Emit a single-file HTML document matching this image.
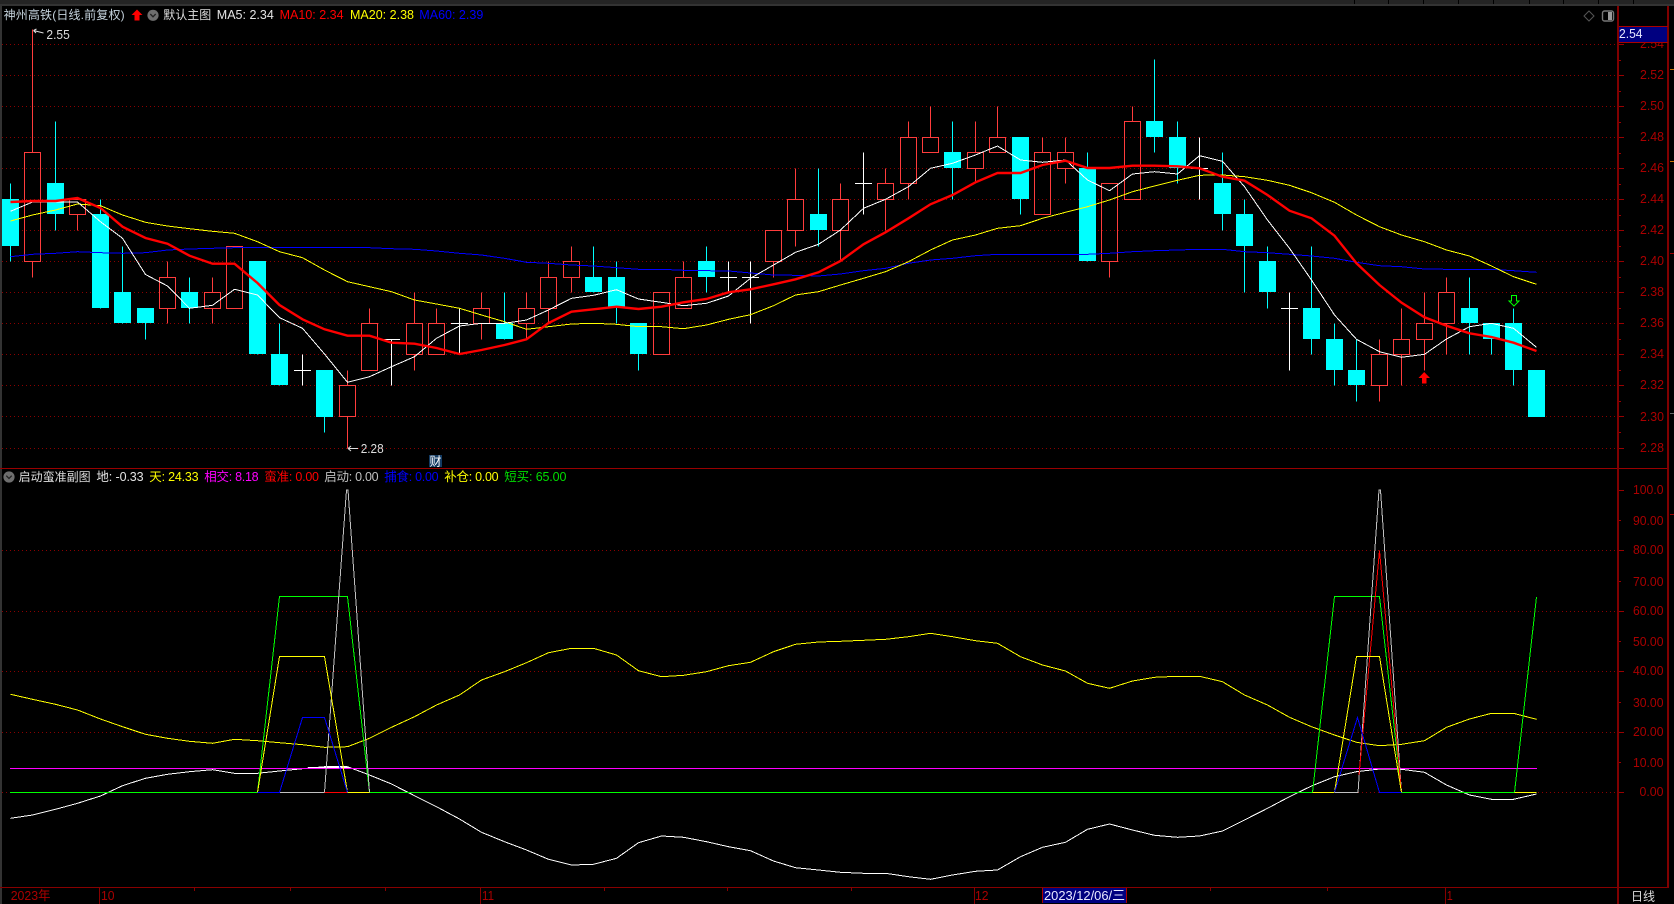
<!DOCTYPE html>
<html>
<head>
<meta charset="utf-8">
<title>神州高铁</title>
<style>
html,body{margin:0;padding:0;background:#000;width:1674px;height:904px;overflow:hidden}
svg{display:block;position:absolute;left:0;top:0}
text{font-family:"Liberation Sans","Noto Sans CJK SC",sans-serif;font-size:12.5px}
.ax{fill:#aa0000;font-size:13px}
.ln{fill:none;stroke-width:1;shape-rendering:crispEdges}
</style>
</head>
<body>
<svg width="1674" height="904" viewBox="0 0 1674 904" xmlns="http://www.w3.org/2000/svg">
<rect width="1674" height="904" fill="#000"/>
<!-- top bar -->
<rect x="0" y="0" width="1674" height="4" fill="#242424"/>
<rect x="0" y="4" width="1674" height="2" fill="#333"/>
<path d="M1354.5 0V4M1388.5 0V4M1423.5 0V4M1458.5 0V4M1493.5 0V4M1529.5 0V4M1563.5 0V4M1598.5 0V4M1633.5 0V4" stroke="#000" shape-rendering="crispEdges"/>
<rect x="0" y="6" width="2" height="898" fill="#333"/>

<!-- grid upper -->
<path class="ln" stroke="#8b0000" stroke-dasharray="1 3" d="M2 44.5H1618M2 75.5H1618M2 106.5H1618M2 137.5H1618M2 168.5H1618M2 199.5H1618M2 230.5H1618M2 261.5H1618M2 292.5H1618M2 323.5H1618M2 354.5H1618M2 385.5H1618M2 416.5H1618M2 448.5H1618"/>
<!-- grid lower -->
<path class="ln" stroke="#8b0000" stroke-dasharray="1 3" d="M2 550.5H1618M2 611.5H1618M2 671.5H1618M2 732.5H1618M2 792.5H1618"/>

<!-- cyan wicks -->
<path class="ln" stroke="#00ffff" d="M10.5 183.5V261.5M55.5 121.5V230.5M100.5 199.5V308.5M122.5 246.5V323.5M145.5 308.5V339.5M189.5 277.5V323.5M257.5 261.5V354.5M279.5 323.5V385.5M324.5 370.5V432.5M504.5 292.5V339.5M593.5 246.5V292.5M616.5 261.5V323.5M638.5 323.5V370.5M706.5 246.5V292.5M818.5 168.5V246.5M952.5 121.5V199.5M1020.5 137.5V214.5M1087.5 152.5V261.5M1154.5 59.5V152.5M1177.5 121.5V183.5M1222.5 152.5V230.5M1244.5 199.5V292.5M1267.5 246.5V308.5M1311.5 246.5V354.5M1334.5 323.5V385.5M1356.5 339.5V401.5M1469.5 277.5V354.5M1491.5 323.5V354.5M1513.5 308.5V385.5"/>
<!-- cyan bodies -->
<path fill="#00ffff" shape-rendering="crispEdges" d="M2 199h17V246h-17zM47 183h17V214h-17zM92 214h17V308h-17zM114 292h17V323h-17zM137 308h17V323h-17zM181 292h17V308h-17zM249 261h17V354h-17zM271 354h17V385h-17zM316 370h17V417h-17zM496 323h17V339h-17zM585 277h17V292h-17zM608 277h17V308h-17zM630 323h17V354h-17zM698 261h17V277h-17zM810 214h17V230h-17zM944 152h17V168h-17zM1012 137h17V199h-17zM1079 168h17V261h-17zM1146 121h17V137h-17zM1169 137h17V168h-17zM1214 183h17V214h-17zM1236 214h17V246h-17zM1259 261h17V292h-17zM1303 308h17V339h-17zM1326 339h17V370h-17zM1348 370h17V385h-17zM1461 308h17V323h-17zM1483 323h17V339h-17zM1505 323h17V370h-17zM1528 370h17V417h-17z"/>
<!-- red candles -->
<path class="ln" stroke="#ff3c3c" d="M32.5 29.5V152.5M32.5 261.5V277.5M24.5 152.5h16V261.5h-16z
M77.5 214.5V230.5M69.5 199.5h16V214.5h-16z
M167.5 261.5V277.5M167.5 308.5V323.5M159.5 277.5h16V308.5h-16z
M212.5 277.5V292.5M212.5 308.5V323.5M204.5 292.5h16V308.5h-16z
M226.5 246.5h16V308.5h-16z
M347.5 370.5V385.5M347.5 416.5V448.5M339.5 385.5h16V416.5h-16z
M369.5 308.5V323.5M361.5 323.5h16V370.5h-16z
M414.5 292.5V323.5M414.5 354.5V370.5M406.5 323.5h16V354.5h-16z
M436.5 308.5V323.5M428.5 323.5h16V354.5h-16z
M481.5 292.5V308.5M481.5 323.5V339.5M473.5 308.5h16V323.5h-16z
M526.5 292.5V308.5M526.5 323.5V339.5M518.5 308.5h16V323.5h-16z
M548.5 261.5V277.5M548.5 308.5V323.5M540.5 277.5h16V308.5h-16z
M571.5 246.5V261.5M571.5 277.5V292.5M563.5 261.5h16V277.5h-16z
M653.5 292.5h16V354.5h-16z
M683.5 261.5V277.5M675.5 277.5h16V308.5h-16z
M773.5 261.5V277.5M765.5 230.5h16V261.5h-16z
M795.5 168.5V199.5M795.5 230.5V246.5M787.5 199.5h16V230.5h-16z
M840.5 183.5V199.5M840.5 230.5V261.5M832.5 199.5h16V230.5h-16z
M885.5 168.5V183.5M885.5 199.5V230.5M877.5 183.5h16V199.5h-16z
M908.5 121.5V137.5M908.5 183.5V199.5M900.5 137.5h16V183.5h-16z
M930.5 106.5V137.5M922.5 137.5h16V152.5h-16z
M975.5 121.5V152.5M975.5 168.5V183.5M967.5 152.5h16V168.5h-16z
M997.5 106.5V137.5M989.5 137.5h16V152.5h-16z
M1042.5 137.5V152.5M1034.5 152.5h16V214.5h-16z
M1065.5 137.5V152.5M1065.5 168.5V183.5M1057.5 152.5h16V168.5h-16z
M1109.5 261.5V277.5M1101.5 183.5h16V261.5h-16z
M1132.5 106.5V121.5M1124.5 121.5h16V199.5h-16z
M1379.5 339.5V354.5M1379.5 385.5V401.5M1371.5 354.5h16V385.5h-16z
M1401.5 308.5V339.5M1401.5 354.5V385.5M1393.5 339.5h16V354.5h-16z
M1424.5 292.5V323.5M1424.5 339.5V370.5M1416.5 323.5h16V339.5h-16z
M1446.5 277.5V292.5M1446.5 323.5V354.5M1438.5 292.5h16V323.5h-16z"/>
<!-- white doji -->
<path class="ln" stroke="#ffffff" d="M302.5 354.5V385.5M294 370.5h17M391.5 339.5V385.5M383 339.5h17M459.5 308.5V354.5M451 323.5h17M728.5 261.5V292.5M720 277.5h17M750.5 261.5V323.5M742 277.5h17M863.5 152.5V214.5M855 183.5h17M1199.5 137.5V199.5M1191 168.5h17M1289.5 292.5V370.5M1281 308.5h17"/>

<!-- MA60 -->
<polyline class="ln" stroke="#0000ff" points="10.5,256.7 32.5,254.3 55.5,253.3 77.5,251.7 100.5,252.7 122.5,253.3 145.5,252.7 167.5,250 189.5,249 212.5,248.3 234.5,247.7 257.5,247.7 279.5,247.7 302.5,247.7 324.5,247.7 347.5,247.7 369.5,247.7 391.5,248.7 414.5,249.3 436.5,251 459.5,253.3 481.5,255 504.5,258.3 526.5,262.3 548.5,263.3 571.5,265 593.5,266 616.5,267.7 638.5,269.3 661.5,269.3 683.5,270.3 706.5,270.7 728.5,271 750.5,273 773.5,275 795.5,275.3 818.5,276 840.5,274 863.5,270.7 885.5,268.3 908.5,263.3 930.5,260 952.5,258.3 975.5,255.7 997.5,254.3 1020.5,254.3 1042.5,254.3 1065.5,254.3 1087.5,254.3 1109.5,253.3 1132.5,251.7 1154.5,250.7 1177.5,250 1199.5,249.3 1222.5,249.3 1244.5,251.7 1267.5,252.7 1289.5,254.3 1311.5,256 1334.5,258.3 1356.5,262.3 1379.5,265.7 1401.5,266.7 1424.5,269 1446.5,269.3 1469.5,269.3 1491.5,269.3 1513.5,270.7 1536.5,272.3"/>
<!-- MA20 -->
<polyline class="ln" stroke="#ffff00" points="10.5,221 32.5,215 55.5,210 77.5,204 100.5,205.7 122.5,215 145.5,222.3 167.5,226 189.5,228.7 212.5,231.3 234.5,233.3 257.5,241.7 279.5,251.7 302.5,257.7 324.5,270 347.5,281.7 369.5,286.7 391.5,291.7 414.5,300 436.5,304 459.5,308.3 481.5,315 504.5,321.7 526.5,329.3 548.5,326.7 571.5,324 593.5,323.3 616.5,324.3 638.5,326.7 661.5,326.7 683.5,328.7 706.5,325 728.5,319.3 750.5,314.7 773.5,305.7 795.5,295 818.5,291.7 840.5,285 863.5,278.3 885.5,271.7 908.5,261.7 930.5,250 952.5,240 975.5,235 997.5,228.3 1020.5,225.7 1042.5,218.3 1065.5,212.3 1087.5,206.7 1109.5,200 1132.5,191.7 1154.5,186 1177.5,180.3 1199.5,175.3 1222.5,175 1244.5,176.7 1267.5,180.3 1289.5,185.3 1311.5,192.7 1334.5,202.3 1356.5,215 1379.5,226.7 1401.5,235 1424.5,241.7 1446.5,250 1469.5,256 1491.5,266 1513.5,276.7 1536.5,284.3"/>
<!-- MA5 -->
<polyline class="ln" stroke="#ffffff" points="10.5,211.3 32.5,202 55.5,202 77.5,202 100.5,221.7 122.5,238.3 145.5,274.5 167.5,286 189.5,308.3 212.5,305.3 234.5,289.3 257.5,295 279.5,317.7 302.5,328.3 324.5,354 347.5,382.3 369.5,376.7 391.5,366.7 414.5,356.7 436.5,338.3 459.5,326 481.5,323.3 504.5,323.3 526.5,320 548.5,310 571.5,298.3 593.5,295.3 616.5,289.7 638.5,299 661.5,302.3 683.5,305.7 706.5,303.3 728.5,296 750.5,278.3 773.5,265 795.5,252.3 818.5,244.3 840.5,230 863.5,208.3 885.5,199.3 908.5,186.7 930.5,168.3 952.5,163.3 975.5,155 997.5,146 1020.5,160 1042.5,162.3 1065.5,160 1087.5,180 1109.5,190.7 1132.5,174 1154.5,171.7 1177.5,174 1199.5,155.7 1222.5,161.3 1244.5,186.7 1267.5,220 1289.5,248.3 1311.5,280 1334.5,315 1356.5,339.3 1379.5,351.7 1401.5,357.3 1424.5,354.3 1446.5,339 1469.5,326.7 1491.5,323.3 1513.5,328.3 1536.5,347.3"/>
<!-- MA10 -->
<polyline fill="none" stroke="#ff0000" stroke-width="2.4" points="10.5,202 32.5,201 55.5,201 77.5,198 100.5,208 122.5,226.7 145.5,238 167.5,243.7 189.5,255.7 212.5,263.7 234.5,263.7 257.5,283 279.5,305 302.5,319.3 324.5,329.3 347.5,335.7 369.5,335.7 391.5,342.7 414.5,343.7 436.5,348 459.5,354 481.5,350 504.5,345 526.5,339.3 548.5,323 571.5,311.7 593.5,309.3 616.5,306.7 638.5,309 661.5,306.7 683.5,302.3 706.5,299 728.5,292.3 750.5,289.3 773.5,284.3 795.5,279.3 818.5,272.3 840.5,261 863.5,244.3 885.5,232.3 908.5,218.3 930.5,204.3 952.5,195 975.5,182.3 997.5,173 1020.5,173 1042.5,165 1065.5,160.7 1087.5,168 1109.5,168 1132.5,165.7 1154.5,165.7 1177.5,166.3 1199.5,168.3 1222.5,176.7 1244.5,180.7 1267.5,195 1289.5,210.7 1311.5,218.3 1334.5,235.7 1356.5,263.3 1379.5,285 1401.5,302.7 1424.5,317.3 1446.5,325.7 1469.5,333.3 1491.5,337 1513.5,342.7 1536.5,351"/>

<!-- signal arrows -->
<path fill="#ff0000" d="M1424.2 372L1430 378H1426.5V383.5H1422V378H1418.5Z"/>
<path fill="none" stroke="#00ff00" d="M1511.5 295.5H1516.5V301H1519L1514 306L1509 301H1511.5Z"/>

<!-- high/low marks -->
<path fill="none" stroke="#dddddd" d="M43.5 33L33.5 30.5M33.5 30.5L36.5 29M33.5 30.5L36 33"/>
<text x="46.4" y="39" fill="#dddddd" textLength="23.4" lengthAdjust="spacingAndGlyphs">2.55</text>
<path fill="none" stroke="#dddddd" d="M348 448.5H358M348 448.5L351 446M348 448.5L351 451"/>
<text x="360.7" y="453" fill="#dddddd" textLength="23" lengthAdjust="spacingAndGlyphs">2.28</text>
<rect x="429" y="455" width="13" height="12" fill="#123a62"/>
<text x="429.5" y="465.5" fill="#ffffff" style="font-size:12px">财</text>

<!-- sub chart -->
<polyline class="ln" stroke="#ffff00" points="10.5,694.3 32.5,699.3 55.5,704.3 77.5,710 100.5,719 122.5,726.7 145.5,734.3 167.5,738.3 189.5,741.3 212.5,743.3 234.5,739.3 257.5,740.7 279.5,742.7 302.5,744.7 324.5,747.3 347.5,746.7 369.5,738.3 391.5,727.3 414.5,716.7 436.5,705 459.5,695 481.5,680 504.5,671.7 526.5,662.7 548.5,652.7 571.5,648.3 593.5,648.3 616.5,655 638.5,670.7 661.5,676.7 683.5,675.3 706.5,671.7 728.5,665.7 750.5,662.3 773.5,651.7 795.5,644.3 818.5,642 840.5,641.3 863.5,640.3 885.5,639.3 908.5,636.7 930.5,633.3 952.5,636.7 975.5,640.7 997.5,643.3 1020.5,656.7 1042.5,665 1065.5,671 1087.5,683.3 1109.5,688.3 1132.5,681 1154.5,677.3 1177.5,676.3 1199.5,676.3 1222.5,681.7 1244.5,695 1267.5,705 1289.5,717.3 1311.5,726.7 1334.5,735 1356.5,742.3 1379.5,745.7 1401.5,744.3 1424.5,740.7 1446.5,727.3 1469.5,719 1491.5,713.3 1513.5,713.3 1536.5,719.3"/>
<polyline class="ln" stroke="#ffffff" points="10.5,818.3 32.5,815 55.5,809.3 77.5,803.3 100.5,796 122.5,785.7 145.5,778.3 167.5,774.3 189.5,771.7 212.5,769.7 234.5,773.3 257.5,773.3 279.5,771 302.5,768.7 324.5,766.7 347.5,766.7 369.5,775 391.5,784 414.5,795.7 436.5,806.7 459.5,819 481.5,832.3 504.5,841.7 526.5,850 548.5,859.3 571.5,865 593.5,864.3 616.5,858.3 638.5,842.7 661.5,836 683.5,837.3 706.5,841.7 728.5,846.7 750.5,850.7 773.5,861 795.5,867.7 818.5,870 840.5,872.3 863.5,873.3 885.5,873.3 908.5,876.7 930.5,879.3 952.5,875 975.5,871.3 997.5,870 1020.5,856.7 1042.5,847.3 1065.5,842.3 1087.5,829.3 1109.5,824 1132.5,830 1154.5,835.3 1177.5,837.3 1199.5,836 1222.5,831 1244.5,820 1267.5,808.3 1289.5,796.7 1311.5,786 1334.5,776.7 1356.5,771.7 1379.5,769 1401.5,769.3 1424.5,772.3 1446.5,785 1469.5,795 1491.5,799.3 1513.5,799.3 1536.5,794"/>
<path class="ln" stroke="#ff00ff" d="M10 768.5H1537"/>
<path class="ln" stroke="#ffffff" d="M308 767.5H350"/>
<!-- 短买 -->
<polyline class="ln" stroke="#00ff00" points="10,792.5 257.5,792.5 279.5,596.5 347.5,596.5 369.5,792.5 1312.5,792.5 1334.5,596.5 1379.5,596.5 1401.5,792.5 1514.5,792.5 1536.5,597"/>
<!-- 启动 -->
<polyline class="ln" stroke="#c0c0c0" points="279.5,792.5 324.5,792.5 346.5,490 348,490 369.5,792.5"/>
<polyline class="ln" stroke="#c0c0c0" points="1334.5,792.5 1358,792.5 1379,490 1380.5,490 1401.5,792.5"/>
<!-- 蜜准 -->
<path class="ln" stroke="#ff0000" d="M324.5 792.5H347.5"/>
<polyline class="ln" stroke="#ff0000" points="1359,775 1379.5,550.5 1401.5,792.5"/>
<!-- 补仓 -->
<polyline class="ln" stroke="#ffff00" points="257.5,792.5 279.5,656.5 324.5,656.5 347.5,792.5 369.5,792.5"/>
<polyline class="ln" stroke="#ffff00" points="1312.5,792.5 1334.5,792.5 1356.5,656.5 1379.5,656.5 1401.5,792.5"/>
<path class="ln" stroke="#ffff00" d="M1514.5 792.5H1536.5"/>
<!-- 捕食 -->
<polyline class="ln" stroke="#0000ff" points="257.5,792.5 279.5,792.5 302.5,717.5 324.5,717.5 347.5,792.5"/>
<polyline class="ln" stroke="#0000ff" points="1334.5,792.5 1357.5,717.5 1379.5,792.5 1401.5,792.5"/>

<!-- dividers -->
<rect x="0" y="468" width="1668" height="1" fill="#990000"/>
<rect x="0" y="887" width="1668" height="1" fill="#880000"/>
<rect x="1617" y="6" width="2" height="898" fill="#800000"/>
<rect x="1667" y="6" width="2" height="882" fill="#800000"/>

<!-- axis ticks -->
<path class="ln" stroke="#990000" d="M1619 44.5h5M1619 75.5h5M1619 106.5h5M1619 137.5h5M1619 168.5h5M1619 199.5h5M1619 230.5h5M1619 261.5h5M1619 292.5h5M1619 323.5h5M1619 354.5h5M1619 385.5h5M1619 416.5h5M1619 448.5h5
M1619 60.5h2M1619 91.5h2M1619 122.5h2M1619 153.5h2M1619 184.5h2M1619 215.5h2M1619 246.5h2M1619 277.5h2M1619 308.5h2M1619 339.5h2M1619 370.5h2M1619 401.5h2M1619 432.5h2
M1619 490.5h5M1619 550.5h5M1619 611.5h5M1619 671.5h5M1619 732.5h5M1619 792.5h5
M1619 520.5h2M1619 581.5h2M1619 641.5h2M1619 702.5h2M1619 762.5h2"/>

<!-- right axis labels upper -->
<text class="ax" x="1640" y="79" textLength="24" lengthAdjust="spacingAndGlyphs">2.52</text>
<text class="ax" x="1640" y="110" textLength="24" lengthAdjust="spacingAndGlyphs">2.50</text>
<text class="ax" x="1640" y="141" textLength="24" lengthAdjust="spacingAndGlyphs">2.48</text>
<text class="ax" x="1640" y="172" textLength="24" lengthAdjust="spacingAndGlyphs">2.46</text>
<text class="ax" x="1640" y="203" textLength="24" lengthAdjust="spacingAndGlyphs">2.44</text>
<text class="ax" x="1640" y="234" textLength="24" lengthAdjust="spacingAndGlyphs">2.42</text>
<text class="ax" x="1640" y="265" textLength="24" lengthAdjust="spacingAndGlyphs">2.40</text>
<text class="ax" x="1640" y="296" textLength="24" lengthAdjust="spacingAndGlyphs">2.38</text>
<text class="ax" x="1640" y="327" textLength="24" lengthAdjust="spacingAndGlyphs">2.36</text>
<text class="ax" x="1640" y="358" textLength="24" lengthAdjust="spacingAndGlyphs">2.34</text>
<text class="ax" x="1640" y="389" textLength="24" lengthAdjust="spacingAndGlyphs">2.32</text>
<text class="ax" x="1640" y="421" textLength="24" lengthAdjust="spacingAndGlyphs">2.30</text>
<text class="ax" x="1640" y="452" textLength="24" lengthAdjust="spacingAndGlyphs">2.28</text>
<text class="ax" x="1640" y="48" textLength="24" lengthAdjust="spacingAndGlyphs">2.54</text>
<!-- current price box -->
<rect x="1619" y="27" width="48" height="15" fill="#000080"/>
<path class="ln" stroke="#aa0000" d="M1619 26.5H1668M1619 42.5H1668"/>
<text x="1619" y="38" fill="#e8e8ff" style="font-size:13px" textLength="23.5" lengthAdjust="spacingAndGlyphs">2.54</text>

<!-- sub axis labels -->
<text class="ax" x="1633" y="494" textLength="30.5" lengthAdjust="spacingAndGlyphs">100.0</text>
<text class="ax" x="1633" y="525" textLength="30.5" lengthAdjust="spacingAndGlyphs">90.00</text>
<text class="ax" x="1633" y="554" textLength="30.5" lengthAdjust="spacingAndGlyphs">80.00</text>
<text class="ax" x="1633" y="586" textLength="30.5" lengthAdjust="spacingAndGlyphs">70.00</text>
<text class="ax" x="1633" y="615" textLength="30.5" lengthAdjust="spacingAndGlyphs">60.00</text>
<text class="ax" x="1633" y="646" textLength="30.5" lengthAdjust="spacingAndGlyphs">50.00</text>
<text class="ax" x="1633" y="675" textLength="30.5" lengthAdjust="spacingAndGlyphs">40.00</text>
<text class="ax" x="1633" y="707" textLength="30.5" lengthAdjust="spacingAndGlyphs">30.00</text>
<text class="ax" x="1633" y="736" textLength="30.5" lengthAdjust="spacingAndGlyphs">20.00</text>
<text class="ax" x="1633" y="767" textLength="30.5" lengthAdjust="spacingAndGlyphs">10.00</text>
<text class="ax" x="1639.5" y="796" textLength="24" lengthAdjust="spacingAndGlyphs">0.00</text>

<!-- right strip marks -->
<path class="ln" stroke="#c87000" d="M1670 69.5h4M1670 161.5h4"/>
<path class="ln" stroke="#990000" d="M1670 253.5h4M1670 514.5h4"/>
<path class="ln" stroke="#666" d="M1670 413.5h4"/>

<!-- bottom axis -->
<path class="ln" stroke="#880000" d="M99.5 888V904M480.5 888V904M974.5 888V904M1445.5 888V904M194.5 888v3M290.5 888v3M385.5 888v3M604.5 888v3M727.5 888v3M851.5 888v3M1210.5 888v3M1327.5 888v3"/>
<text x="10.7" y="900" fill="#aa0000" style="font-size:13px" textLength="39.7" lengthAdjust="spacingAndGlyphs">2023年</text>
<text x="101" y="900" fill="#aa0000" style="font-size:13px" textLength="13.5" lengthAdjust="spacingAndGlyphs">10</text>
<text x="482" y="900" fill="#aa0000" style="font-size:13px" textLength="12" lengthAdjust="spacingAndGlyphs">11</text>
<text x="975" y="900" fill="#aa0000" style="font-size:13px" textLength="13.5" lengthAdjust="spacingAndGlyphs">12</text>
<text x="1446.7" y="900" fill="#aa0000" style="font-size:13px" textLength="6" lengthAdjust="spacingAndGlyphs">1</text>
<rect x="1043" y="888" width="83" height="15" fill="#000080"/>
<path class="ln" stroke="#aa0000" d="M1042.5 888V903M1126.5 888V903"/>
<text x="1044" y="900" fill="#e8e8ff" style="font-size:13px" textLength="81" lengthAdjust="spacingAndGlyphs">2023/12/06/三</text>
<text x="1631" y="900.5" fill="#dddddd" style="font-size:12px">日线</text>

<!-- top right icons -->
<path fill="none" stroke="#555" d="M1589 11L1594 16L1589 21L1584 16Z"/>
<rect x="1602.5" y="11" width="11" height="10" rx="2" fill="none" stroke="#777" stroke-width="1.4"/>
<rect x="1608" y="12" width="4" height="8" fill="#999"/>

<!-- main legend -->
<text x="3.6" y="19" fill="#c4d2dc" style="font-size:12px" textLength="121" lengthAdjust="spacing">神州高铁(日线.前复权)</text>
<path fill="#ff0000" d="M137 9.5L142.5 15H139.5V20.5H134.5V15H131.5Z"/>
<circle cx="153" cy="15.3" r="5.6" fill="#6e6e6e"/>
<path fill="none" stroke="#222" stroke-width="1.3" d="M150.3 14L153 16.8L155.7 14"/>
<text x="163.2" y="19" fill="#dddddd" style="font-size:12px">默认主图</text>
<text x="216.8" y="19" fill="#e4e4e4" textLength="57" lengthAdjust="spacingAndGlyphs">MA5: 2.34</text>
<text x="279.6" y="19" fill="#ff0000" textLength="64" lengthAdjust="spacingAndGlyphs">MA10: 2.34</text>
<text x="350" y="19" fill="#ffff00" textLength="64" lengthAdjust="spacingAndGlyphs">MA20: 2.38</text>
<text x="419.3" y="19" fill="#0000ff" textLength="64" lengthAdjust="spacingAndGlyphs">MA60: 2.39</text>

<!-- sub legend -->
<circle cx="9" cy="477" r="5.6" fill="#6e6e6e"/>
<path fill="none" stroke="#222" stroke-width="1.3" d="M6.3 475.7L9 478.5L11.7 475.7"/>
<text x="18.6" y="481" fill="#dddddd" style="font-size:12px">启动蛮准副图</text>
<text x="96.4" y="481" fill="#e4e4e4" textLength="47.2" lengthAdjust="spacing">地: -0.33</text>
<text x="149.3" y="481" fill="#ffff00" textLength="49.3" lengthAdjust="spacing">天: 24.33</text>
<text x="204.3" y="481" fill="#ff00ff" textLength="54.3" lengthAdjust="spacing">相交: 8.18</text>
<text x="264.3" y="481" fill="#ff0000" textLength="54.7" lengthAdjust="spacing">蛮准: 0.00</text>
<text x="324.3" y="481" fill="#c0c0c0" textLength="54.3" lengthAdjust="spacing">启动: 0.00</text>
<text x="384.3" y="481" fill="#0000ff" textLength="54.3" lengthAdjust="spacing">捕食: 0.00</text>
<text x="444.3" y="481" fill="#ffff00" textLength="54.3" lengthAdjust="spacing">补仓: 0.00</text>
<text x="504.3" y="481" fill="#00dd00" textLength="62.1" lengthAdjust="spacing">短买: 65.00</text>
</svg>
</body>
</html>
